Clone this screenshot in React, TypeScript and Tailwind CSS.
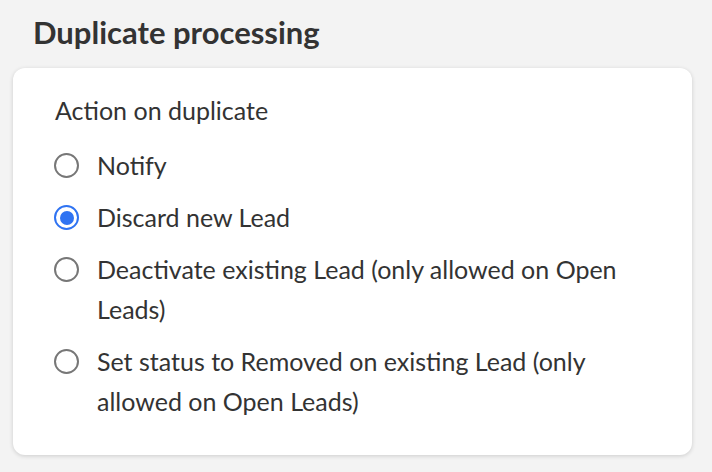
import * as React from 'react';

const options = [
  { id: 'notify', label: 'Notify' },
  { id: 'discard', label: 'Discard new Lead' },
  { id: 'deactivate', label: 'Deactivate existing Lead (only allowed on Open Leads)' },
  { id: 'removed', label: 'Set status to Removed on existing Lead (only allowed on Open Leads)' },
];

function Radio({ checked }: { checked: boolean }) {
  return checked ? (
    <span className="mt-[8px] flex h-[25px] w-[25px] shrink-0 items-center justify-center rounded-full border-[2.5px] border-[#2f73f2] bg-white">
      <span className="h-[14px] w-[14px] rounded-full bg-[#2f73f2]" />
    </span>
  ) : (
    <span className="mt-[8px] h-[25px] w-[25px] shrink-0 rounded-full border-2 border-[#777] bg-white" />
  );
}

export default function App() {
  const [value, setValue] = React.useState('discard');

  return (
    <div className="min-h-[472px] w-[712px] bg-[#f3f3f3] px-[13px] pt-[12px] text-[#333] [font-family:Lato,'Noto_Sans',sans-serif]">
      <h2 className="pl-[20px] text-[31px] font-bold leading-[40px] text-[#333]">Duplicate processing</h2>
      <div className="mt-[16px] w-[679px] rounded-[12px] bg-white pb-[34px] pl-[41px] pr-[40px] pt-[22px] shadow-[0_1px_4px_rgba(0,0,0,0.16)]">
        <div className="pl-[1px] text-[25px] leading-[40px]">Action on duplicate</div>
        <div className="mt-[15px] flex flex-col gap-[12px]">
          {options.map((o) => (
            <label key={o.id} className="flex cursor-pointer items-start gap-[18px] text-[25px] leading-[40px]" onClick={() => setValue(o.id)}>
              <Radio checked={value === o.id} />
              <span>{o.label}</span>
            </label>
          ))}
        </div>
      </div>
    </div>
  );
}
